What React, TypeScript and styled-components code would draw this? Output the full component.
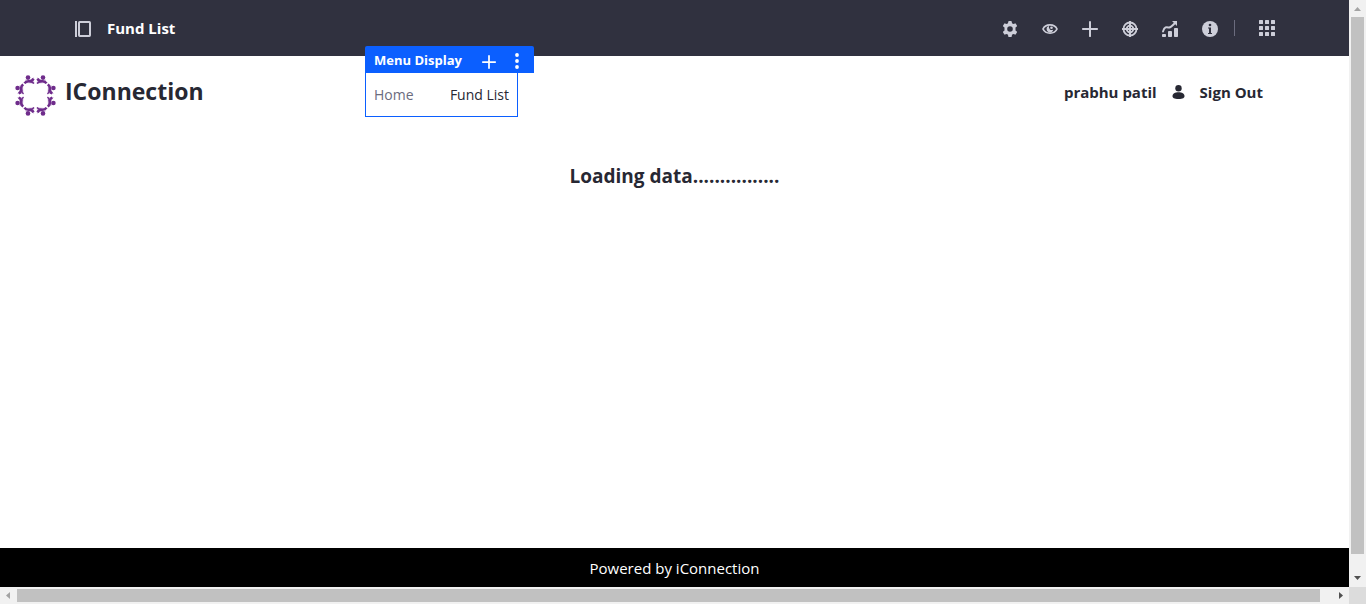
import React from "react";
import styled, { createGlobalStyle } from "styled-components";

const GlobalStyle = createGlobalStyle`
  * { box-sizing: border-box; }
  body {
    margin: 0;
    background: #fff;
    color: #272833;
    font-family: "Open Sans", "Noto Sans", sans-serif;
    font-size: 15px;
    line-height: 24px;
  }
  button { font: inherit; color: inherit; background: none; border: 0; padding: 0; cursor: pointer; }
  a { color: inherit; text-decoration: none; }
  svg { display: block; flex: none; }
`;

const Shell = styled.div`
  display: grid;
  grid-template: minmax(0, 1fr) 17px / minmax(0, 1fr) 17px;
  height: 100vh;
`;

const Page = styled.div`
  display: flex;
  flex-direction: column;
`;

const ControlBar = styled.header`
  display: flex;
  align-items: center;
  justify-content: space-between;
  height: 56px;
  padding: 0 74px 0 75px;
  background: #30313f;
  color: #cdced9;
`;

const BarGroup = styled.div`
  display: flex;
  align-items: center;
  gap: 16px;
`;

const PageTitle = styled.h1`
  margin: 0;
  color: #fff;
  font-size: 15px;
  font-weight: 700;
`;

const Tools = styled.div`
  display: flex;
  align-items: center;
  gap: 24px;
`;

const IconButton = styled.button<{ $compact?: boolean }>`
  display: flex;
  align-items: flex-end;
  justify-content: center;
  width: 16px;
  height: ${(p) => (p.$compact ? "16px" : "18px")};
`;

const AppsGroup = styled.div`
  display: flex;
  margin-left: -8px;
  padding-left: 24px;
  border-left: 1px solid #6b6c7e;
`;

const SiteHeader = styled.div`
  display: flex;
  align-items: flex-start;
  justify-content: space-between;
  position: relative;
  height: 80px;
  padding: 19px 86px 0 15px;
`;

const Brand = styled.a`
  display: flex;
  gap: 8px;
  font-size: 23px;
  font-weight: 700;
  line-height: 32px;
`;

const Account = styled.div`
  display: flex;
  align-items: center;
  gap: 15px;
  padding-top: 5px;
  font-weight: 700;
`;

const MenuPortlet = styled.section`
  position: absolute;
  left: 365px;
  top: -10px;
  font-size: 14px;
`;

const PortletBar = styled.div`
  display: flex;
  align-items: center;
  width: 169px;
  height: 27px;
  padding: 0 9px;
  border-radius: 2px 2px 0 0;
  background: #0b5fff;
  color: #fff;
  font-size: 13px;
  font-weight: 700;
`;

const PortletActions = styled.div`
  display: flex;
  gap: 12px;
  margin-left: auto;
`;

const MenuNav = styled.nav`
  display: flex;
  align-items: center;
  justify-content: space-between;
  width: 153px;
  height: 44px;
  padding: 0 8px;
  border: 1px solid #0b5fff;
  border-top: 0;
`;

const MenuLink = styled.a<{ $active?: boolean }>`
  color: ${(p) => (p.$active ? "#272833" : "#6b6c7e")};
`;

const Main = styled.main`
  flex: 1;
  padding-top: 26px;
  text-align: center;
`;

const Loading = styled.h2`
  margin: 0;
  font-size: 19px;
  font-weight: 700;
  line-height: 28px;
`;

const Footer = styled.footer`
  height: 39px;
  background: #000;
  color: #fff;
  line-height: 40px;
  text-align: center;
`;

const Track = styled.div<{ $vertical?: boolean }>`
  display: flex;
  flex-direction: ${(p) => (p.$vertical ? "column" : "row")};
  align-items: center;
  background: #f1f1f1;
`;

const Arrow = styled.svg`
  flex: none;
  width: 17px;
  height: 17px;
`;

const Thumb = styled.div<{ $vertical?: boolean }>`
  flex: 1;
  background: #c1c1c1;
  ${(p) => (p.$vertical ? "width: 13px; margin-bottom: 16px;" : "height: 13px; margin-right: 12px;")}
`;

const Corner = styled.div`
  background: #dcdcdc;
`;

const PlusIcon = ({ size = 16 }: { size?: number }) => (
  <svg width={size} height={size} viewBox="0 0 16 16" fill="currentColor">
    <path d="M7 0.5q1-1 2 0V7h6.500q1 1 0 2H9v6.500q-1 1-2 0V9H.5q-1-1 0-2H7z" />
  </svg>
);

const SidebarIcon = () => (
  <svg width="16" height="16" viewBox="0 0 16 16" fill="none" stroke="currentColor">
    <path d="M1 0v16" strokeWidth="2" />
    <rect x="4" y="1" width="11" height="14" rx=".7" strokeWidth="2" />
  </svg>
);

const GearIcon = () => (
  <svg width="16" height="16" viewBox="0 0 16 16" fill="currentColor">
    <path
      fillRule="evenodd"
      d="M6.300.6q.1-.6.700-.6h2q.6 0 .7.600l.3 1.700 1.300.8 1.700-.7q.5-.2.800.3l1.100 1.900q.3.500-.1.900l-1.300 1.100v2.800l1.300 1.100q.4.400.1.900l-1.100 1.900q-.3.500-.8.300l-1.700-.7-1.300.8-.3 1.700q-.1.600-.7.600H7q-.6 0-.7-.6L6 13.700l-1.300-.8-1.700.7q-.5.200-.8-.3l-1.100-1.900q-.3-.5.100-.9l1.300-1.100V6.600L1.200 5.500q-.4-.4-.1-.9l1.100-1.900q.3-.5.800-.3l1.700.7L6 2.300zM8 5.200a2.800 2.800 0 1 0 0 5.600 2.800 2.800 0 0 0 0-5.600z"
    />
  </svg>
);

const EyeIcon = () => (
  <svg width="16" height="16" viewBox="0 0 16 16">
    <path d="M1 8C3.500 2.500 12.500 2.500 15 8 12.500 13.500 3.500 13.500 1 8z" fill="none" stroke="currentColor" strokeWidth="1.700" />
    <path d="M7 4.900A3.300 3.300 0 1 0 11.200 8.500Q9.500 9.600 7.900 8.400 6.500 6.800 7 4.900z" fill="currentColor" />
    <circle cx="9.500" cy="6.700" r="1.300" fill="currentColor" />
  </svg>
);

const TargetIcon = () => (
  <svg width="16" height="16" viewBox="0 0 16 16" fill="none" stroke="currentColor">
    <circle cx="8" cy="8" r="6.500" strokeWidth="1.800" />
    <circle cx="8" cy="8" r="3.300" strokeWidth="1.800" />
    <path d="M8 0v16M0 8h16" strokeWidth="2" />
  </svg>
);

const ChartIcon = () => (
  <svg width="16" height="16" viewBox="0 0 16 16" fill="currentColor">
    <rect x="0" y="13" width="4" height="3" rx=".8" />
    <rect x="6" y="10" width="4" height="6" rx=".8" />
    <rect x="12" y="7" width="4" height="9" rx=".8" />
    <path d="M1 10.500C2.500 5.500 4.500 6 6.500 6.500S9.500 5.500 13.500 1.500" fill="none" stroke="currentColor" strokeWidth="1.900" strokeLinecap="round" />
    <path d="M10 0h5v5z" />
  </svg>
);

const InfoIcon = () => (
  <svg width="16" height="16" viewBox="0 0 16 16">
    <circle cx="8" cy="8" r="8" fill="currentColor" />
    <circle cx="8" cy="4" r="1.300" fill="#30313f" />
    <path d="M6 6.500H9V12h1v1H6v-1H7V7.500H6z" fill="#30313f" />
  </svg>
);

const steps = [0, 6, 12];

const GridIcon = () => (
  <svg width="16" height="16" viewBox="0 0 16 16" fill="currentColor">
    {steps.map((y) => steps.map((x) => <rect key={`${x}-${y}`} x={x} y={y} width="4" height="4" rx=".5" />))}
  </svg>
);

const DotsIcon = () => (
  <svg width="16" height="16" viewBox="0 0 16 16" fill="currentColor">
    <circle cx="8" cy="2" r="1.900" />
    <circle cx="8" cy="8" r="1.900" />
    <circle cx="8" cy="14" r="1.900" />
  </svg>
);

const UserIcon = () => (
  <svg width="13" height="16" viewBox="0 0 13 16" fill="currentColor">
    <circle cx="6.500" cy="4.200" r="3.200" />
    <path d="M.5 12C.5 9.500 3 8.200 6.500 8.200s6 1.300 6 3.800c0 2-1.500 3-6 3s-6-1-6-3z" />
  </svg>
);

const LogoPair = ({ turn }: { turn: number }) => (
  <g transform={`rotate(${turn})`}>
    {[1, -1].map((side) => (
      <g key={side} transform={`scale(${side} 1)`}>
        <path d="M1.400-18.500L5-16 10.500-16 10-12.500 1.400-11.800z" fill="#dccbe5" />
        <circle cx="7.500" cy="-17.900" r="2.300" fill="#6f2c8b" />
        <path
          d="M2-16.800Q3.500-14 6.500-14.300 9.500-14.600 11-12.200"
          fill="none"
          stroke="#6f2c8b"
          strokeWidth="2.500"
        />
        <path d="M1.500-12Q3-14 6-13.800" fill="none" stroke="#6f2c8b" strokeWidth="1.500" />
      </g>
    ))}
  </g>
);

const Logo = () => (
  <svg width="42" height="42" viewBox="-20.500 -20.500 42 42">
    {[0, 90, 180, 270].map((turn) => (
      <LogoPair key={turn} turn={turn} />
    ))}
  </svg>
);

const tools = [
  { label: "Configure Page", Icon: GearIcon },
  { label: "Preview", Icon: EyeIcon },
  { label: "Add", Icon: PlusIcon },
  { label: "Experience", Icon: TargetIcon },
  { label: "Analytics", Icon: ChartIcon },
  { label: "Information", Icon: InfoIcon },
];

export default function App() {
  return (
    <>
      <GlobalStyle />
      <Shell>
        <Page>
          <ControlBar>
            <BarGroup>
              <IconButton aria-label="Toggle sidebar"><SidebarIcon /></IconButton>
              <PageTitle>Fund List</PageTitle>
            </BarGroup>
            <Tools>
              {tools.map(({ label, Icon }) => (
                <IconButton key={label} aria-label={label}><Icon /></IconButton>
              ))}
              <AppsGroup>
                <IconButton $compact aria-label="Applications"><GridIcon /></IconButton>
              </AppsGroup>
            </Tools>
          </ControlBar>
          <SiteHeader>
            <Brand href="#home"><Logo />IConnection</Brand>
            <MenuPortlet>
              <PortletBar>
                Menu Display
                <PortletActions>
                  <IconButton aria-label="Add widget"><PlusIcon size={14} /></IconButton>
                  <IconButton aria-label="Widget options"><DotsIcon /></IconButton>
                </PortletActions>
              </PortletBar>
              <MenuNav>
                <MenuLink href="#home">Home</MenuLink>
                <MenuLink href="#fund-list" $active>Fund List</MenuLink>
              </MenuNav>
            </MenuPortlet>
            <Account>
              <span>prabhu patil</span>
              <UserIcon />
              <a href="#sign-out">Sign Out</a>
            </Account>
          </SiteHeader>
          <Main>
            <Loading>Loading data................</Loading>
          </Main>
          <Footer>Powered by iConnection</Footer>
        </Page>
        <Track $vertical>
          <Arrow viewBox="0 0 17 17"><path d="M5 11h7L8.500 7z" fill="#a3a3a3" /></Arrow>
          <Thumb $vertical />
          <Arrow viewBox="0 0 17 17"><path d="M5 6h7l-3.500 4z" fill="#505050" /></Arrow>
        </Track>
        <Track>
          <Arrow viewBox="0 0 17 17"><path d="M10 5v7L6 8.500z" fill="#a3a3a3" /></Arrow>
          <Thumb />
          <Arrow viewBox="0 0 17 17"><path d="M7 5v7l4-3.500z" fill="#505050" /></Arrow>
        </Track>
        <Corner />
      </Shell>
    </>
  );
}
